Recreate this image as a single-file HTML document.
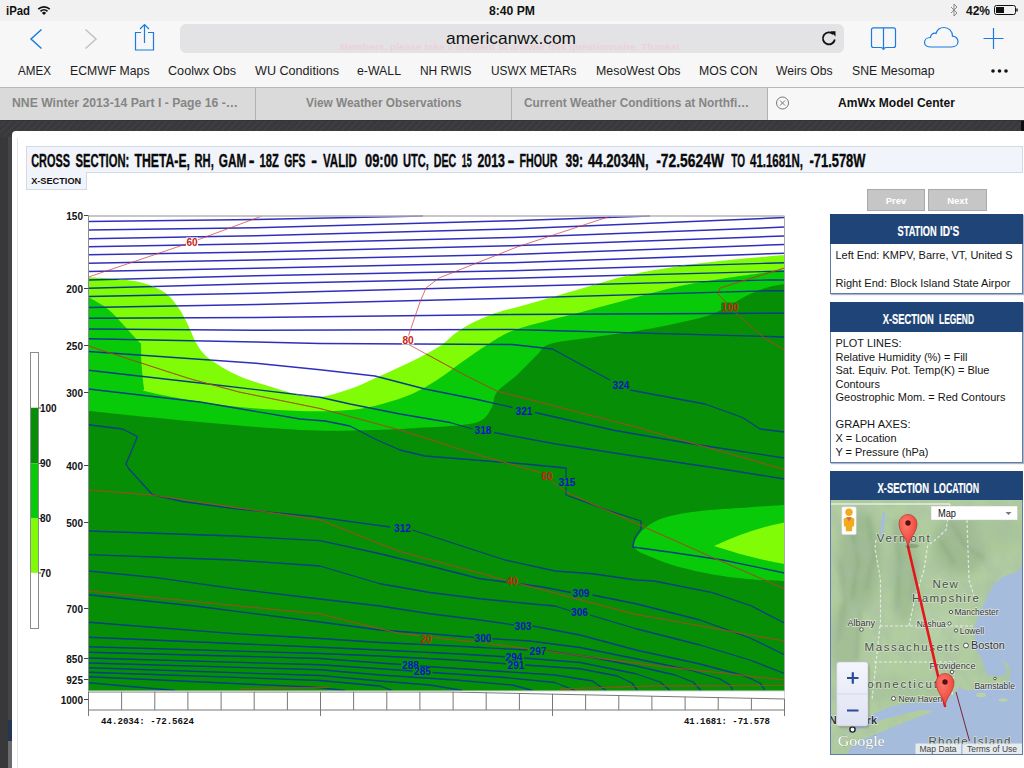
<!DOCTYPE html>
<html><head><meta charset="utf-8">
<style>
html,body{margin:0;padding:0;}
body{width:1024px;height:768px;overflow:hidden;position:relative;background:#3a3a3c;font-family:"Liberation Sans",sans-serif;}
.abs{position:absolute;}
#status{left:0;top:0;width:1024px;height:21px;background:#f1f1f1;}
#toolbar{left:0;top:21px;width:1024px;height:66px;background:#f7f7f7;}
#urlbar{left:180px;top:24px;width:664px;height:29px;background:#e3e3e5;border-radius:6px;}
#tabs{left:0;top:87px;width:1024px;height:33px;background:#dadada;border-top:1px solid #b9b9b9;box-sizing:border-box;}
.tab{position:absolute;top:0;height:32px;box-sizing:border-box;border-right:1px solid #b4b4b4;color:#7c7c7c;font-weight:bold;font-size:13px;line-height:31px;text-align:center;white-space:nowrap;}
#dark{left:0;top:120px;width:1024px;height:648px;background:#3a3a3c;background-image:repeating-linear-gradient(135deg,#39393b 0,#39393b 3px,#3e3e40 3px,#3e3e40 5px);}
#page{left:12px;top:131px;width:1012px;height:637px;background:#fff;border-top-left-radius:4px;}
.bm{position:absolute;top:63px;font-size:13.5px;color:#1a1a1a;white-space:nowrap;line-height:16px;}
.st{position:absolute;top:3px;font-size:12.5px;font-weight:bold;color:#111;line-height:15px;white-space:nowrap;}
</style></head><body>
<div id="status" class="abs"></div>
<div id="toolbar" class="abs"></div>
<div id="urlbar" class="abs"></div>
<div id="tabs" class="abs"></div>
<div id="dark" class="abs"></div>
<div id="page" class="abs"></div>
<!--CHROME_START-->
<div class="abs" style="left:768px;top:88px;width:256px;height:32px;background:#f7f7f7;"></div>
<div class="abs" style="left:255px;top:88px;width:1px;height:32px;background:#b2b2b2;"></div>
<div class="abs" style="left:511px;top:88px;width:1px;height:32px;background:#b2b2b2;"></div>
<div class="abs" style="left:767px;top:88px;width:1px;height:32px;background:#b2b2b2;"></div>
<svg class="abs" style="left:0;top:0" width="1024" height="131" viewBox="0 0 1024 131" font-family="'Liberation Sans',sans-serif">
<!-- status bar -->
<g font-weight="bold" font-size="12" fill="#111">
<text x="6" y="14.5" textLength="24" lengthAdjust="spacingAndGlyphs">iPad</text>
<text x="489" y="14.5" textLength="46" lengthAdjust="spacingAndGlyphs">8:40 PM</text>
<text x="966" y="14.5" textLength="24" lengthAdjust="spacingAndGlyphs">42%</text>
</g>
<!-- wifi -->
<g fill="none" stroke="#111" stroke-width="1.7" stroke-linecap="butt">
<path d="M38.3 9.2 A8 8 0 0 1 49.7 9.2"/>
<path d="M40.5 11.4 A5 5 0 0 1 47.5 11.4"/>
</g>
<path d="M44 15 L41.9 12.9 A3 3 0 0 1 46.1 12.9 Z" fill="#111"/>
<!-- bluetooth -->
<path d="M951 7 L957 13 L954 16 L954 4 L957 7 L951 13" fill="none" stroke="#8a8a8a" stroke-width="1"/>
<!-- battery -->
<rect x="994.5" y="5.5" width="21" height="9" rx="2" fill="none" stroke="#111" stroke-width="1"/>
<rect x="996" y="7" width="8" height="6" fill="#111"/>
<path d="M1017 8.5 v3" stroke="#111" stroke-width="1.4"/>
<!-- toolbar icons -->
<path d="M41.5 29.5 L31 39 L41.5 48.5" fill="none" stroke="#1b7be0" stroke-width="1.5"/>
<path d="M85.5 29.5 L96 39 L85.5 48.5" fill="none" stroke="#c2c2c2" stroke-width="1.5"/>
<g fill="none" stroke="#1b7be0" stroke-width="1.2">
<path d="M141 32.5 H135.5 V50 H153.5 V32.5 H148"/>
<path d="M144.5 43 V25 M140 29 L144.5 24.5 L149 29"/>
</g>
<!-- url text -->
<text x="446" y="44" font-size="17" fill="#111" textLength="130" lengthAdjust="spacingAndGlyphs">americanwx.com</text>
<text x="340" y="49.5" font-size="9.5" font-weight="bold" fill="#ecd2d8" textLength="340" lengthAdjust="spacingAndGlyphs">Members, please take a moment to answer this questionnaire. Thanks!</text>
<!-- reload -->
<path d="M833.2 34.2 A6 6 0 1 0 834.8 39.5" fill="none" stroke="#111" stroke-width="1.8"/>
<path d="M830.3 31.2 L835.5 31.2 L835.5 36.6 Z" fill="#111"/>
<!-- bookmarks icon -->
<g fill="none" stroke="#1b7be0" stroke-width="1.2">
<path d="M873.5 27.8 H893.5 a2 2 0 0 1 2 2 V45.5 a2 2 0 0 1 -2 2 H886.5 Q883.5 47.5 883.5 50 Q883.5 47.5 880.5 47.5 H873.5 a2 2 0 0 1 -2 -2 V29.8 a2 2 0 0 1 2 -2 Z M883.5 27.8 V49"/>
<!-- cloud -->
<path d="M931 47 H951.5 C955.5 47 958 44.5 958 41.5 C958 38.5 955.5 36.2 952.5 36.2 C952.5 31 948.5 27.5 944 27.5 C940 27.5 937 30 936 33.5 C933.5 32.5 930.5 34.5 930.5 37.5 C927 37.5 924.5 39.5 924.5 42.5 C924.5 45 927 47 931 47 Z"/>
<!-- plus -->
<path d="M983.5 38.5 H1003.5 M993.5 28 V49"/>
</g>
<!-- bookmarks bar -->
<g font-size="13" fill="#1c1c1c" lengthAdjust="spacingAndGlyphs">
<text x="18" y="75.3" textLength="33" lengthAdjust="spacingAndGlyphs">AMEX</text>
<text x="70" y="75.3" textLength="79.5" lengthAdjust="spacingAndGlyphs">ECMWF Maps</text>
<text x="168" y="75.3" textLength="68" lengthAdjust="spacingAndGlyphs">Coolwx Obs</text>
<text x="255" y="75.3" textLength="84" lengthAdjust="spacingAndGlyphs">WU Conditions</text>
<text x="357" y="75.3" textLength="44" lengthAdjust="spacingAndGlyphs">e-WALL</text>
<text x="420" y="75.3" textLength="51.5" lengthAdjust="spacingAndGlyphs">NH RWIS</text>
<text x="491" y="75.3" textLength="85.5" lengthAdjust="spacingAndGlyphs">USWX METARs</text>
<text x="596" y="75.3" textLength="84.5" lengthAdjust="spacingAndGlyphs">MesoWest Obs</text>
<text x="699" y="75.3" textLength="58.5" lengthAdjust="spacingAndGlyphs">MOS CON</text>
<text x="776" y="75.3" textLength="56.5" lengthAdjust="spacingAndGlyphs">Weirs Obs</text>
<text x="852" y="75.3" textLength="82.5" lengthAdjust="spacingAndGlyphs">SNE Mesomap</text>
</g>
<circle cx="993" cy="71" r="1.8" fill="#111"/><circle cx="999.5" cy="71" r="1.8" fill="#111"/><circle cx="1006" cy="71" r="1.8" fill="#111"/>
<!-- tabs -->
<g font-size="13" font-weight="bold" fill="#858585">
<text x="12" y="106.8" textLength="226" lengthAdjust="spacingAndGlyphs">NNE Winter 2013-14 Part I - Page 16 -…</text>
<text x="306" y="106.8" textLength="155.5" lengthAdjust="spacingAndGlyphs">View Weather Observations</text>
<text x="524" y="106.8" textLength="225" lengthAdjust="spacingAndGlyphs">Current Weather Conditions at Northfi…</text>
<text x="838" y="106.8" textLength="117" lengthAdjust="spacingAndGlyphs" fill="#111">AmWx Model Center</text>
</g>
<circle cx="782.5" cy="103" r="6" fill="none" stroke="#777" stroke-width="1"/>
<path d="M780 100.5 L785 105.5 M785 100.5 L780 105.5" stroke="#777" stroke-width="1"/>
</svg>
<!--CHROME_END-->
<!--C1_START-->
<div class="abs" style="left:17px;top:138px;width:1px;height:640px;background:#e4e4e4;"></div>
<div class="abs" style="left:0;top:137px;width:8px;height:640px;background:#38383a;"></div>
<div class="abs" style="left:8px;top:137px;width:4px;height:583px;background:#454548;"></div>
<div class="abs" style="left:8px;top:720px;width:4px;height:21px;background:#253552;"></div>
<div class="abs" style="left:8px;top:741px;width:4px;height:27px;background:#6c6c6e;"></div>
<div class="abs" style="left:1021px;top:120px;width:3px;height:11px;background:#0e0e12;"></div>
<div class="abs" style="left:0;top:120px;width:1024px;height:1px;background:#343436;"></div>
<div class="abs" style="left:26px;top:146px;width:997px;height:27px;background:#f1f4fa;border:1px solid #d3dae3;box-sizing:border-box;"></div>
<div class="abs" style="left:26px;top:172px;width:61px;height:18px;background:#f1f4fa;border:1px solid #d3dae3;border-top:none;box-sizing:border-box;"></div>
<svg class="abs" style="left:0;top:140px" width="1024" height="60" viewBox="0 140 1024 60" font-family="'Liberation Sans',sans-serif" font-weight="bold">
<g font-size="17.6" fill="#0a0a0a" stroke="#0a0a0a" stroke-width="0.35">
<text x="31.25" y="166.9" textLength="38.75" lengthAdjust="spacingAndGlyphs">CROSS</text>
<text x="75.5" y="166.9" textLength="53.75" lengthAdjust="spacingAndGlyphs">SECTION:</text>
<text x="134.5" y="166.9" textLength="55.5" lengthAdjust="spacingAndGlyphs">THETA-E,</text>
<text x="194.5" y="166.9" textLength="19.25" lengthAdjust="spacingAndGlyphs">RH,</text>
<text x="218.75" y="166.9" textLength="27.5" lengthAdjust="spacingAndGlyphs">GAM</text>
<text x="248.75" y="166.9" textLength="5.75" lengthAdjust="spacingAndGlyphs">-</text>
<text x="259.5" y="166.9" textLength="19.25" lengthAdjust="spacingAndGlyphs">18Z</text>
<text x="284.25" y="166.9" textLength="21.25" lengthAdjust="spacingAndGlyphs">GFS</text>
<text x="311.25" y="166.9" textLength="5.75" lengthAdjust="spacingAndGlyphs">-</text>
<text x="323" y="166.9" textLength="33.75" lengthAdjust="spacingAndGlyphs">VALID</text>
<text x="365" y="166.9" textLength="33" lengthAdjust="spacingAndGlyphs">09:00</text>
<text x="403" y="166.9" textLength="25.75" lengthAdjust="spacingAndGlyphs">UTC,</text>
<text x="433.75" y="166.9" textLength="22.5" lengthAdjust="spacingAndGlyphs">DEC</text>
<text x="461.8" y="166.9" textLength="10" lengthAdjust="spacingAndGlyphs">15</text>
<text x="477.5" y="166.9" textLength="27.5" lengthAdjust="spacingAndGlyphs">2013</text>
<text x="507.5" y="166.9" textLength="7" lengthAdjust="spacingAndGlyphs">-</text>
<text x="519.5" y="166.9" textLength="38" lengthAdjust="spacingAndGlyphs">FHOUR</text>
<text x="565.5" y="166.9" textLength="17.5" lengthAdjust="spacingAndGlyphs">39:</text>
<text x="588" y="166.9" textLength="60.75" lengthAdjust="spacingAndGlyphs">44.2034N,</text>
<text x="656.25" y="166.9" textLength="67.75" lengthAdjust="spacingAndGlyphs">-72.5624W</text>
<text x="731.25" y="166.9" textLength="13.75" lengthAdjust="spacingAndGlyphs">TO</text>
<text x="750" y="166.9" textLength="53" lengthAdjust="spacingAndGlyphs">41.1681N,</text>
<text x="809.5" y="166.9" textLength="56" lengthAdjust="spacingAndGlyphs">-71.578W</text>
</g>
<text x="31.2" y="184" font-size="9" fill="#111" textLength="50" lengthAdjust="spacingAndGlyphs">X-SECTION</text>
</svg>
<!-- prev/next -->
<div class="abs" style="left:867px;top:189px;width:58px;height:22px;background:#c6c6c6;border:1px solid #a9a9a9;box-sizing:border-box;color:#fff;font-weight:bold;font-size:9.5px;line-height:21px;text-align:center;">Prev</div>
<div class="abs" style="left:928px;top:189px;width:59px;height:22px;background:#c6c6c6;border:1px solid #a9a9a9;box-sizing:border-box;color:#fff;font-weight:bold;font-size:9.5px;line-height:21px;text-align:center;">Next</div>
<!-- station box -->
<div class="abs" style="left:830px;top:214px;width:193px;height:80px;background:#fff;border:1px solid #5d7ca8;box-sizing:border-box;box-shadow:1px 1px 1px rgba(90,110,150,.5);"></div>
<div class="abs" style="left:830px;top:214px;width:193px;height:29.5px;background:#1f4477;"></div>
<!-- legend box -->
<div class="abs" style="left:830px;top:302px;width:193px;height:161px;background:#fff;border:1px solid #5d7ca8;box-sizing:border-box;box-shadow:1px 1px 1px rgba(90,110,150,.5);"></div>
<div class="abs" style="left:830px;top:302px;width:193px;height:29.5px;background:#1f4477;"></div>
<!-- location box -->
<div class="abs" style="left:830px;top:471px;width:193px;height:284px;background:#fff;border:1px solid #5d7ca8;box-sizing:border-box;"></div>
<div class="abs" style="left:830px;top:471px;width:193px;height:29px;background:#1f4477;"></div>
<svg class="abs" style="left:824px;top:210px" width="200" height="300" viewBox="824 210 200 300" font-family="'Liberation Sans',sans-serif">
<g font-size="14.6" font-weight="bold" fill="#fff" stroke="#fff" stroke-width="0.2">
<text x="897.5" y="235.8" textLength="39.2" lengthAdjust="spacingAndGlyphs">STATION</text>
<text x="940" y="235.8" textLength="19.2" lengthAdjust="spacingAndGlyphs">ID'S</text>
<text x="882.75" y="323.8" textLength="51" lengthAdjust="spacingAndGlyphs">X-SECTION</text>
<text x="939" y="323.8" textLength="35" lengthAdjust="spacingAndGlyphs">LEGEND</text>
<text x="877.5" y="492.6" textLength="51.5" lengthAdjust="spacingAndGlyphs">X-SECTION</text>
<text x="933.75" y="492.6" textLength="45.25" lengthAdjust="spacingAndGlyphs">LOCATION</text>
</g>
<g font-size="11" fill="#151515">
<text x="835.5" y="259" textLength="177" lengthAdjust="spacingAndGlyphs">Left End: KMPV, Barre, VT, United S</text>
<text x="835.5" y="287" textLength="175" lengthAdjust="spacingAndGlyphs">Right End: Block Island State Airpor</text>
<text x="835.5" y="347" textLength="66" lengthAdjust="spacingAndGlyphs">PLOT LINES:</text>
<text x="835.5" y="361" textLength="132" lengthAdjust="spacingAndGlyphs">Relative Humidity (%) = Fill</text>
<text x="835.5" y="373.8" textLength="154" lengthAdjust="spacingAndGlyphs">Sat. Equiv. Pot. Temp(K) = Blue</text>
<text x="835.5" y="388" textLength="44.5" lengthAdjust="spacingAndGlyphs">Contours</text>
<text x="835.5" y="401" textLength="170" lengthAdjust="spacingAndGlyphs">Geostrophic Mom. = Red Contours</text>
<text x="835.5" y="427.9" textLength="75" lengthAdjust="spacingAndGlyphs">GRAPH AXES:</text>
<text x="835.5" y="442" textLength="61" lengthAdjust="spacingAndGlyphs">X = Location</text>
<text x="835.5" y="456" textLength="93" lengthAdjust="spacingAndGlyphs">Y = Pressure (hPa)</text>
</g>
</svg>
<!--C1_END-->
<!--CHART_START-->
<svg class="abs" style="left:0;top:200px" width="800" height="540" viewBox="0 200 800 540" font-family="'Liberation Sans',sans-serif">
<rect x="88.5" y="216" width="696.0" height="475" fill="#fff"/>
<path d="M88.5 277.25 C92.1 277.5 101.6 277.7 110 278.5 C118.4 279.3 130.0 279.8 139 282 C148.0 284.2 157.3 287.6 164 292 C170.7 296.4 174.8 302.7 179 308.5 C183.2 314.3 186.1 321.2 189 327 C191.9 332.8 193.2 338.2 196.5 343.5 C199.8 348.8 201.9 353.1 209 358.5 C216.1 363.9 227.8 371.0 239 376 C250.2 381.0 266.3 385.3 276.5 388.5 C286.7 391.7 292.8 393.6 300 395 C307.2 396.4 311.7 398.0 320 397 C328.3 396.0 340.0 392.5 350 389 C360.0 385.5 369.6 380.7 380 376 C390.4 371.3 402.5 366.0 412.5 361 C422.5 356.0 432.1 351.2 440 346 C447.9 340.8 451.7 335.2 460 330 C468.3 324.8 479.2 319.2 490 315 C500.8 310.8 510.0 309.3 525 305 C540.0 300.7 562.5 294.0 580 289 C597.5 284.0 613.3 278.8 630 275 C646.7 271.2 663.3 268.5 680 266 C696.7 263.5 712.6 261.8 730 260 C747.4 258.2 775.4 255.8 784.5 255 L784.5 691 L88.5 691 Z" fill="#80fc06"/>
<path d="M88.5 297 C91.9 299.2 102.2 304.3 109 310 C115.8 315.7 124.0 325.7 129 331 C134.0 336.3 137.0 339.8 139 342 C141.0 344.2 140.6 340.9 141 344.5 C141.4 348.1 141.0 356.2 141.5 363.5 C142.0 370.8 143.2 383.3 144 388 C144.8 392.7 139.0 389.5 146.5 391.5 C154.0 393.5 173.6 397.4 189 400 C204.4 402.6 220.5 405.2 239 407 C257.5 408.8 281.5 410.5 300 411 C318.5 411.5 336.3 411.2 350 410 C363.7 408.8 371.7 406.7 382 404 C392.3 401.3 402.8 398.0 412 394 C421.2 390.0 428.7 385.3 437 380 C445.3 374.7 453.7 367.8 462 362 C470.3 356.2 478.7 350.2 487 345 C495.3 339.8 501.5 335.2 512 331 C522.5 326.8 538.7 323.1 550 320 C561.3 316.9 566.7 316.0 580 312.5 C593.3 309.0 613.3 303.4 630 299 C646.7 294.6 663.3 289.6 680 286 C696.7 282.4 712.6 280.2 730 277.5 C747.4 274.8 775.4 271.2 784.5 270 L784.5 691 L88.5 691 Z" fill="#08ca08"/>
<path d="M88.5 411 C105.2 412.7 153.8 417.8 189 421 C224.2 424.2 269.0 428.5 300 430 C331.0 431.5 354.2 430.4 375 430 C395.8 429.6 410.5 428.3 425 427.5 C439.5 426.7 452.5 426.2 462 425 C471.5 423.8 477.0 423.0 482 420 C487.0 417.0 489.5 411.7 492 407 C494.5 402.3 492.8 397.3 497 392 C501.2 386.7 510.3 381.2 517 375 C523.7 368.8 531.5 360.2 537 355 C542.5 349.8 540.8 346.9 550 344 C559.2 341.1 576.7 339.8 592 337.5 C607.3 335.2 627.3 332.5 642 330 C656.7 327.5 668.7 325.0 680 322.5 C691.3 320.0 701.7 317.9 710 315 C718.3 312.1 723.3 308.5 730 305 C736.7 301.5 743.8 296.9 750 294 C756.2 291.1 761.2 289.2 767 287.5 C772.8 285.8 781.6 284.6 784.5 284 L784.5 691 L88.5 691 Z" fill="#068e06"/>
<path d="M784.5 505 C778.3 505.4 761.6 506.5 747.5 507.5 C733.4 508.5 713.8 509.3 700 511 C686.2 512.7 674.2 514.7 665 517.5 C655.8 520.3 649.8 524.4 645 528 C640.2 531.6 637.8 536.0 636 539 C634.2 542.0 633.7 544.0 634 546 C634.3 548.0 635.8 549.4 638 551 C640.2 552.6 641.8 553.2 647.5 555.5 C653.2 557.8 662.1 561.9 672.5 565 C682.9 568.1 697.5 571.7 710 574 C722.5 576.3 735.1 577.8 747.5 579 C759.9 580.2 778.3 580.7 784.5 581 Z" fill="#08ca08"/>
<path d="M784.5 522.5 Q750 529 714 546 Q750 558 784.5 564 Z" fill="#80fc06"/>
<clipPath id="gclip"><path d="M88.5 277.25 C92.1 277.5 101.6 277.7 110 278.5 C118.4 279.3 130.0 279.8 139 282 C148.0 284.2 157.3 287.6 164 292 C170.7 296.4 174.8 302.7 179 308.5 C183.2 314.3 186.1 321.2 189 327 C191.9 332.8 193.2 338.2 196.5 343.5 C199.8 348.8 201.9 353.1 209 358.5 C216.1 363.9 227.8 371.0 239 376 C250.2 381.0 266.3 385.3 276.5 388.5 C286.7 391.7 292.8 393.6 300 395 C307.2 396.4 311.7 398.0 320 397 C328.3 396.0 340.0 392.5 350 389 C360.0 385.5 369.6 380.7 380 376 C390.4 371.3 402.5 366.0 412.5 361 C422.5 356.0 432.1 351.2 440 346 C447.9 340.8 451.7 335.2 460 330 C468.3 324.8 479.2 319.2 490 315 C500.8 310.8 510.0 309.3 525 305 C540.0 300.7 562.5 294.0 580 289 C597.5 284.0 613.3 278.8 630 275 C646.7 271.2 663.3 268.5 680 266 C696.7 263.5 712.6 261.8 730 260 C747.4 258.2 775.4 255.8 784.5 255 L784.5 691 L88.5 691 Z"/></clipPath>
<clipPath id="wclip"><path d="M88.5 277.25 C92.1 277.5 101.6 277.7 110 278.5 C118.4 279.3 130.0 279.8 139 282 C148.0 284.2 157.3 287.6 164 292 C170.7 296.4 174.8 302.7 179 308.5 C183.2 314.3 186.1 321.2 189 327 C191.9 332.8 193.2 338.2 196.5 343.5 C199.8 348.8 201.9 353.1 209 358.5 C216.1 363.9 227.8 371.0 239 376 C250.2 381.0 266.3 385.3 276.5 388.5 C286.7 391.7 292.8 393.6 300 395 C307.2 396.4 311.7 398.0 320 397 C328.3 396.0 340.0 392.5 350 389 C360.0 385.5 369.6 380.7 380 376 C390.4 371.3 402.5 366.0 412.5 361 C422.5 356.0 432.1 351.2 440 346 C447.9 340.8 451.7 335.2 460 330 C468.3 324.8 479.2 319.2 490 315 C500.8 310.8 510.0 309.3 525 305 C540.0 300.7 562.5 294.0 580 289 C597.5 284.0 613.3 278.8 630 275 C646.7 271.2 663.3 268.5 680 266 C696.7 263.5 712.6 261.8 730 260 C747.4 258.2 775.4 255.8 784.5 255 L784.5 214 L88.5 214 Z"/></clipPath>
<g fill="none" stroke="#2424b8" stroke-width="1.5" stroke-linejoin="round" opacity="0.95" clip-path="url(#wclip)">
<path d="M88.5 221.5 L256 219.5 L423 216"/>
<path d="M88.5 230 L256 227.75 L512 220.75 L650 216"/>
<path d="M88.5 238.75 L256 235.75 L512 229 L768 218.25 L784.5 217.5"/>
<path d="M88.5 246.75 L256 243.75 L512 237.5 L768 227.75 L784.5 227"/>
<path d="M88.5 254.75 L256 252 L512 245.75 L768 236.5 L784.5 236"/>
<path d="M88.5 263.25 L256 260 L512 254.5 L768 245 L784.5 244.5"/>
<path d="M88.5 271.5 L256 268.25 L512 262.75 L768 253.75 L784.5 253.25"/>
<path d="M88.5 280 L256 275.75 L512 270.75 L768 263.25 L784.5 262.75"/>
<path d="M88.5 288.25 L256 283.75 L512 278.25 L768 271.5 L784.5 271.25"/>
<path d="M88.5 296.5 L256 293.25 L512 286.5 L768 280 L784.5 280"/>
<path d="M88.5 307.5 L256 304.5 L512 298.25 L768 290.75 L784.5 290.75"/>
<path d="M88.5 318.25 L256 317.5 L512 314.5 L768 313.25 L784.5 313.25"/>
<path d="M88.5 329 L256 330.25 L512 329.5 L768 336.5 L784.5 337"/>
<path d="M88.5 338.75 L256 342 L320 343.5 L512 344.5 L552.5 349 L580 364 L610 380 M630 390 L705 404 L742.5 417.5 L760 429 L784.5 432"/>
<path d="M88.5 351.5 L256 363.25 L320 369.75 L375 376 L425 389 L475 399 L512.5 407.5 M535 412.5 L615 430.5 L693 444 L784.5 458"/>
<path d="M88.5 370.25 L200 383 L320 397.25 L350 404 L400 414 L450 422.5 L472.5 429 M494 432.5 L556 444 L634 456 L712.5 467.5 L784.5 479"/>
<path d="M88.5 389 L200 402 L300 419 L325 421 L350 426 L375 439 L400 450 L425 456 L475 460 L525 464 L566 468 L566 495 L610 511 L641 521 L641 529 L635 537.5 L632.5 547 L672.5 552.5 L722.5 560 L784.5 573"/>
<path d="M88.5 424.75 L122.5 429 L137.5 436.5 L126 464 L129 469 L152.5 494.75 L182.5 501.5 L234 508.6 L312.5 516.4 L390 527 M412.5 530 L455 543.75 L505 560 L555 571 L592.5 573.75 L636 580 L654 581 L712.5 592.6 L751.5 606 L784.5 623"/>
<path d="M88.5 531 L234 536 L320 540.6 L380 553.75 L430 566 L480 578.75 L510 582.5 L542.5 587 L571 592.5 M592.5 595 L636 603.75 L700 620 L750 638 L784.5 654.75"/>
<path d="M88.5 554.7 L234 560 L320 566 L380 583.75 L430 592.5 L480 598.75 L530 603.75 L555 606 L571 611 M590 615 L636 628.75 L700 645 L750 660 L784.5 673.5"/>
<path d="M88.5 571 L156 577.7 L234 588.7 L320 599 L380 606 L430 613.75 L480 620 L514 625 M532.5 626 L580 635 L636 650 L700 664 L745 676 L760 683 L765 690.5"/>
<path d="M88.5 594.75 L195 606 L320 622 L380 630 L430 633.75 L474 637.5 M492.5 638.75 L530 641 L580 647.5 L636 658.75 L690 670 L720 679 L730 685 L732.5 690.5"/>
<path d="M88.5 622.25 L234 633.6 L320 638.5 L380 642.5 L455 646 L527.5 650 M547.5 651 L592.5 657.5 L636 666 L675 675 L693 682 L701 690.5"/>
<path d="M88.5 637.25 L320 647.25 L380 650 L455 653.75 L505 656.75 M524 658 L580 662.5 L636 673.75 L660 682 L670 690.5"/>
<path d="M88.5 646.75 L320 653.5 L380 656 L455 660 L506 663.75 M525 665 L580 668.75 L617.5 676 L632 683 L637.5 690.5"/>
<path d="M88.5 652.25 L320 658.5 L380 663 L401 664.5 M420 666 L480 670 L555 675 L592.5 681 L606 690.5"/>
<path d="M88.5 658 L320 664.75 L380 668.75 L412.5 671 M432.5 672.5 L505 677.5 L555 682.5 L575 690.5"/>
<path d="M88.5 663 L320 669.75 L380 675 L455 680 L512.5 685 L532.5 690.5"/>
<path d="M88.5 667.75 L320 675.5 L380 681 L430 685 L462.5 690.5"/>
<path d="M88.5 672.25 L320 680.5 L380 686 L392.5 690.5"/>
<path d="M88.5 676.75 L316 687.25 L345 690.5"/>
<path d="M88.5 682.75 L175 690.5"/>
</g>
<g fill="none" stroke="#053f86" stroke-width="1.3" stroke-linejoin="round" clip-path="url(#gclip)">
<path d="M88.5 221.5 L256 219.5 L423 216"/>
<path d="M88.5 230 L256 227.75 L512 220.75 L650 216"/>
<path d="M88.5 238.75 L256 235.75 L512 229 L768 218.25 L784.5 217.5"/>
<path d="M88.5 246.75 L256 243.75 L512 237.5 L768 227.75 L784.5 227"/>
<path d="M88.5 254.75 L256 252 L512 245.75 L768 236.5 L784.5 236"/>
<path d="M88.5 263.25 L256 260 L512 254.5 L768 245 L784.5 244.5"/>
<path d="M88.5 271.5 L256 268.25 L512 262.75 L768 253.75 L784.5 253.25"/>
<path d="M88.5 280 L256 275.75 L512 270.75 L768 263.25 L784.5 262.75"/>
<path d="M88.5 288.25 L256 283.75 L512 278.25 L768 271.5 L784.5 271.25"/>
<path d="M88.5 296.5 L256 293.25 L512 286.5 L768 280 L784.5 280"/>
<path d="M88.5 307.5 L256 304.5 L512 298.25 L768 290.75 L784.5 290.75"/>
<path d="M88.5 318.25 L256 317.5 L512 314.5 L768 313.25 L784.5 313.25"/>
<path d="M88.5 329 L256 330.25 L512 329.5 L768 336.5 L784.5 337"/>
<path d="M88.5 338.75 L256 342 L320 343.5 L512 344.5 L552.5 349 L580 364 L610 380 M630 390 L705 404 L742.5 417.5 L760 429 L784.5 432"/>
<path d="M88.5 351.5 L256 363.25 L320 369.75 L375 376 L425 389 L475 399 L512.5 407.5 M535 412.5 L615 430.5 L693 444 L784.5 458"/>
<path d="M88.5 370.25 L200 383 L320 397.25 L350 404 L400 414 L450 422.5 L472.5 429 M494 432.5 L556 444 L634 456 L712.5 467.5 L784.5 479"/>
<path d="M88.5 389 L200 402 L300 419 L325 421 L350 426 L375 439 L400 450 L425 456 L475 460 L525 464 L566 468 L566 495 L610 511 L641 521 L641 529 L635 537.5 L632.5 547 L672.5 552.5 L722.5 560 L784.5 573"/>
<path d="M88.5 424.75 L122.5 429 L137.5 436.5 L126 464 L129 469 L152.5 494.75 L182.5 501.5 L234 508.6 L312.5 516.4 L390 527 M412.5 530 L455 543.75 L505 560 L555 571 L592.5 573.75 L636 580 L654 581 L712.5 592.6 L751.5 606 L784.5 623"/>
<path d="M88.5 531 L234 536 L320 540.6 L380 553.75 L430 566 L480 578.75 L510 582.5 L542.5 587 L571 592.5 M592.5 595 L636 603.75 L700 620 L750 638 L784.5 654.75"/>
<path d="M88.5 554.7 L234 560 L320 566 L380 583.75 L430 592.5 L480 598.75 L530 603.75 L555 606 L571 611 M590 615 L636 628.75 L700 645 L750 660 L784.5 673.5"/>
<path d="M88.5 571 L156 577.7 L234 588.7 L320 599 L380 606 L430 613.75 L480 620 L514 625 M532.5 626 L580 635 L636 650 L700 664 L745 676 L760 683 L765 690.5"/>
<path d="M88.5 594.75 L195 606 L320 622 L380 630 L430 633.75 L474 637.5 M492.5 638.75 L530 641 L580 647.5 L636 658.75 L690 670 L720 679 L730 685 L732.5 690.5"/>
<path d="M88.5 622.25 L234 633.6 L320 638.5 L380 642.5 L455 646 L527.5 650 M547.5 651 L592.5 657.5 L636 666 L675 675 L693 682 L701 690.5"/>
<path d="M88.5 637.25 L320 647.25 L380 650 L455 653.75 L505 656.75 M524 658 L580 662.5 L636 673.75 L660 682 L670 690.5"/>
<path d="M88.5 646.75 L320 653.5 L380 656 L455 660 L506 663.75 M525 665 L580 668.75 L617.5 676 L632 683 L637.5 690.5"/>
<path d="M88.5 652.25 L320 658.5 L380 663 L401 664.5 M420 666 L480 670 L555 675 L592.5 681 L606 690.5"/>
<path d="M88.5 658 L320 664.75 L380 668.75 L412.5 671 M432.5 672.5 L505 677.5 L555 682.5 L575 690.5"/>
<path d="M88.5 663 L320 669.75 L380 675 L455 680 L512.5 685 L532.5 690.5"/>
<path d="M88.5 667.75 L320 675.5 L380 681 L430 685 L462.5 690.5"/>
<path d="M88.5 672.25 L320 680.5 L380 686 L392.5 690.5"/>
<path d="M88.5 676.75 L316 687.25 L345 690.5"/>
<path d="M88.5 682.75 L175 690.5"/>
</g>
<g fill="none" stroke="#d03a3a" stroke-width="0.8" opacity="0.9">
<path d="M88.5 277 L192 242 L262 216"/>
<path d="M611 216 L517 247 L439 278 L426 288 L420 302 L406 343 L468.5 377 L497.6 391.4 L634 426.5 L784.5 469.5"/>
<path d="M784.5 268 L720 288 L718 294 L736 313 L763 337 L784.5 350"/>
<path d="M88.5 346 L189 378.5 L239 392 L320 408.5 L400 430 L475 454 L540 472.5 L568 493 L642 526 L712.5 557.4 L784.5 588.7"/>
<path d="M88.5 490 L152 495 L320 520 L400 551.5 L505 580 L634 614 L784.5 641"/>
<path d="M88.5 591 L320 614 L400 633.6 L500 645 L650 665 L784.5 680"/>
<path d="M240 688.5 L330 687.5"/>
<path d="M560 689 L650 686 L784.5 685.5"/>
</g>
<g fill="none" stroke="#86560f" stroke-width="0.8" opacity="0.8" clip-path="url(#gclip)">
<path d="M88.5 277 L192 242 L262 216"/>
<path d="M611 216 L517 247 L439 278 L426 288 L420 302 L406 343 L468.5 377 L497.6 391.4 L634 426.5 L784.5 469.5"/>
<path d="M784.5 268 L720 288 L718 294 L736 313 L763 337 L784.5 350"/>
<path d="M88.5 346 L189 378.5 L239 392 L320 408.5 L400 430 L475 454 L540 472.5 L568 493 L642 526 L712.5 557.4 L784.5 588.7"/>
<path d="M88.5 490 L152 495 L320 520 L400 551.5 L505 580 L634 614 L784.5 641"/>
<path d="M88.5 591 L320 614 L400 633.6 L500 645 L650 665 L784.5 680"/>
<path d="M240 688.5 L330 687.5"/>
<path d="M560 689 L650 686 L784.5 685.5"/>
</g>
<rect x="612.1" y="381" width="17.8" height="9" fill="#068e06"/>
<text x="621" y="389.1" text-anchor="middle" font-size="10" font-weight="bold" fill="#0a14c8" textLength="16.8" lengthAdjust="spacingAndGlyphs">324</text>
<rect x="515.1" y="407" width="17.8" height="9" fill="#068e06"/>
<text x="524" y="415.1" text-anchor="middle" font-size="10" font-weight="bold" fill="#0a14c8" textLength="16.8" lengthAdjust="spacingAndGlyphs">321</text>
<rect x="474.1" y="426" width="17.8" height="9" fill="#068e06"/>
<text x="483" y="434.1" text-anchor="middle" font-size="10" font-weight="bold" fill="#0a14c8" textLength="16.8" lengthAdjust="spacingAndGlyphs">318</text>
<rect x="558.1" y="478" width="17.8" height="9" fill="#068e06"/>
<text x="567" y="486.1" text-anchor="middle" font-size="10" font-weight="bold" fill="#0a14c8" textLength="16.8" lengthAdjust="spacingAndGlyphs">315</text>
<rect x="393.6" y="524.25" width="17.8" height="9" fill="#068e06"/>
<text x="402.5" y="532.35" text-anchor="middle" font-size="10" font-weight="bold" fill="#0a14c8" textLength="16.8" lengthAdjust="spacingAndGlyphs">312</text>
<rect x="572.1" y="588.5" width="17.8" height="9" fill="#068e06"/>
<text x="581" y="596.6" text-anchor="middle" font-size="10" font-weight="bold" fill="#0a14c8" textLength="16.8" lengthAdjust="spacingAndGlyphs">309</text>
<rect x="570.6" y="608" width="17.8" height="9" fill="#068e06"/>
<text x="579.5" y="616.1" text-anchor="middle" font-size="10" font-weight="bold" fill="#0a14c8" textLength="16.8" lengthAdjust="spacingAndGlyphs">306</text>
<rect x="514.1" y="621.5" width="17.8" height="9" fill="#068e06"/>
<text x="523" y="629.6" text-anchor="middle" font-size="10" font-weight="bold" fill="#0a14c8" textLength="16.8" lengthAdjust="spacingAndGlyphs">303</text>
<rect x="474.1" y="634.25" width="17.8" height="9" fill="#068e06"/>
<text x="483" y="642.35" text-anchor="middle" font-size="10" font-weight="bold" fill="#0a14c8" textLength="16.8" lengthAdjust="spacingAndGlyphs">300</text>
<rect x="529.1" y="646.5" width="17.8" height="9" fill="#068e06"/>
<text x="538" y="654.6" text-anchor="middle" font-size="10" font-weight="bold" fill="#0a14c8" textLength="16.8" lengthAdjust="spacingAndGlyphs">297</text>
<rect x="505.1" y="653" width="17.8" height="9" fill="#068e06"/>
<text x="514" y="661.1" text-anchor="middle" font-size="10" font-weight="bold" fill="#0a14c8" textLength="16.8" lengthAdjust="spacingAndGlyphs">294</text>
<rect x="507.1" y="660.5" width="17.8" height="9" fill="#068e06"/>
<text x="516" y="668.6" text-anchor="middle" font-size="10" font-weight="bold" fill="#0a14c8" textLength="16.8" lengthAdjust="spacingAndGlyphs">291</text>
<rect x="401.6" y="660.5" width="17.8" height="9" fill="#068e06"/>
<text x="410.5" y="668.6" text-anchor="middle" font-size="10" font-weight="bold" fill="#0a14c8" textLength="16.8" lengthAdjust="spacingAndGlyphs">288</text>
<rect x="413.6" y="667.25" width="17.8" height="9" fill="#068e06"/>
<text x="422.5" y="675.35" text-anchor="middle" font-size="10" font-weight="bold" fill="#0a14c8" textLength="16.8" lengthAdjust="spacingAndGlyphs">285</text>
<rect x="185.9" y="237.5" width="12.2" height="9" fill="#fff"/>
<text x="192" y="245.6" text-anchor="middle" font-size="10" font-weight="bold" fill="#c81e14" textLength="11.2" lengthAdjust="spacingAndGlyphs">60</text>
<rect x="401.9" y="335.5" width="12.2" height="9" fill="#fff"/>
<text x="408" y="343.6" text-anchor="middle" font-size="10" font-weight="bold" fill="#c81e14" textLength="11.2" lengthAdjust="spacingAndGlyphs">80</text>
<rect x="721.1" y="302.5" width="17.8" height="9" fill="#068e06"/>
<text x="730" y="310.6" text-anchor="middle" font-size="10" font-weight="bold" fill="#c81e14" textLength="16.8" lengthAdjust="spacingAndGlyphs">100</text>
<rect x="540.9" y="471.5" width="12.2" height="9" fill="#068e06"/>
<text x="547" y="479.6" text-anchor="middle" font-size="10" font-weight="bold" fill="#c81e14" textLength="11.2" lengthAdjust="spacingAndGlyphs">60</text>
<rect x="505.9" y="576.5" width="12.2" height="9" fill="#068e06"/>
<text x="512" y="584.6" text-anchor="middle" font-size="10" font-weight="bold" fill="#c81e14" textLength="11.2" lengthAdjust="spacingAndGlyphs">40</text>
<rect x="419.9" y="634.5" width="12.2" height="9" fill="#068e06"/>
<text x="426" y="642.6" text-anchor="middle" font-size="10" font-weight="bold" fill="#c81e14" textLength="11.2" lengthAdjust="spacingAndGlyphs">20</text>
<path d="M88.5 216 V716" fill="none" stroke="#8c8c8c" stroke-width="1"/>
<path d="M784.5 216 V716" fill="none" stroke="#a8a8a8" stroke-width="1"/>
<path d="M88.5 216 H784.5" stroke="#b4b4b4" stroke-width="1.5"/>
<rect x="88.5" y="691" width="696.0" height="26" fill="#fff"/>
<path d="M88.5 710 H784.5 M88.5 692 H450 L784.5 699 M88.5 691.5 V716 M121.6 691.5 V710 M154.8 691.5 V710 M187.9 691.5 V710 M221.1 691.5 V710 M254.2 691.5 V710 M287.4 691.5 V710 M320.5 691.5 V716 M353.6 691.5 V710 M386.8 691.5 V710 M419.9 691.5 V710 M453.1 691.6 V710 M486.2 692.3 V710 M519.4 693.1 V710 M552.5 693.8 V716 M585.6 694.5 V710 M618.8 695.3 V710 M651.9 696.0 V710 M685.1 696.8 V710 M718.2 697.5 V710 M751.4 698.3 V710 M784.5 699.0 V716" fill="none" stroke="#787878" stroke-width="1"/>
<path d="M88.5 691 H784.5" stroke="#d8d8d8" stroke-width="1" />
<text x="83" y="219.6" text-anchor="end" font-size="10" font-weight="bold" fill="#111">150</text>
<text x="83" y="292.6" text-anchor="end" font-size="10" font-weight="bold" fill="#111">200</text>
<text x="83" y="349.6" text-anchor="end" font-size="10" font-weight="bold" fill="#111">250</text>
<text x="83" y="396.6" text-anchor="end" font-size="10" font-weight="bold" fill="#111">300</text>
<text x="83" y="469.6" text-anchor="end" font-size="10" font-weight="bold" fill="#111">400</text>
<text x="83" y="526.6" text-anchor="end" font-size="10" font-weight="bold" fill="#111">500</text>
<text x="83" y="612.6" text-anchor="end" font-size="10" font-weight="bold" fill="#111">700</text>
<text x="83" y="662.6" text-anchor="end" font-size="10" font-weight="bold" fill="#111">850</text>
<text x="83" y="683.6" text-anchor="end" font-size="10" font-weight="bold" fill="#111">925</text>
<text x="83" y="703.6" text-anchor="end" font-size="10" font-weight="bold" fill="#111">1000</text>
<path d=" M84 215.5 H88.5 M84 288.5 H88.5 M84 345.5 H88.5 M84 392.5 H88.5 M84 465.5 H88.5 M84 522.5 H88.5 M84 608.5 H88.5 M84 658.5 H88.5 M84 679.5 H88.5 M84 699.5 H88.5" stroke="#444" stroke-width="1" fill="none"/>
<g font-family="'Liberation Mono',monospace" font-weight="bold" font-size="9" fill="#111">
<text x="101" y="724" textLength="93" lengthAdjust="spacingAndGlyphs">44.2034: -72.5624</text>
<text x="684" y="724" textLength="86" lengthAdjust="spacingAndGlyphs">41.1681: -71.578</text>
</g>
<rect x="30.5" y="352.5" width="8" height="276" fill="#fff" stroke="#8c8c8c" stroke-width="1"/>
<rect x="31" y="407.75" width="7" height="55.75" fill="#068e06"/>
<rect x="31" y="463.5" width="7" height="55" fill="#08ca08"/>
<rect x="31" y="518.5" width="7" height="54.25" fill="#80fc06"/>
<path d="M38.5 408 H41" stroke="#555" stroke-width="1"/>
<text x="40" y="411.6" font-size="10" fill="#111" font-weight="bold">100</text>
<path d="M38.5 463.5 H41" stroke="#555" stroke-width="1"/>
<text x="40" y="467.1" font-size="10" fill="#111" font-weight="bold">90</text>
<path d="M38.5 518.5 H41" stroke="#555" stroke-width="1"/>
<text x="40" y="522.1" font-size="10" fill="#111" font-weight="bold">80</text>
<path d="M38.5 573 H41" stroke="#555" stroke-width="1"/>
<text x="40" y="576.6" font-size="10" fill="#111" font-weight="bold">70</text>
</svg>
<!--CHART_END-->
<!--MAP_START-->
<svg class="abs" style="left:831px;top:500px" width="191" height="254" viewBox="831 500 191 254" font-family="'Liberation Sans',sans-serif">
<defs>
<filter id="bl" x="-20%" y="-20%" width="140%" height="140%"><feGaussianBlur stdDeviation="5"/></filter>
<filter id="bl2" x="-20%" y="-20%" width="140%" height="140%"><feGaussianBlur stdDeviation="2.2"/></filter>
<filter id="sh" x="-30%" y="-30%" width="160%" height="160%"><feGaussianBlur stdDeviation="1.2"/></filter>
<linearGradient id="zg" x1="0" y1="0" x2="0" y2="1"><stop offset="0" stop-color="#f4f5fc"/><stop offset="1" stop-color="#dfe2f3"/></linearGradient>
<radialGradient id="pin" cx="0.4" cy="0.3" r="0.8"><stop offset="0" stop-color="#ff7a6e"/><stop offset="1" stop-color="#e8362c"/></radialGradient>
<filter id="noise" x="0" y="0" width="100%" height="100%"><feTurbulence type="fractalNoise" baseFrequency="0.07 0.05" numOctaves="4" seed="7"/><feColorMatrix type="matrix" values="0 0 0 0 0.38  0 0 0 0 0.5  0 0 0 0 0.38  1.6 0 0 0 -0.62"/></filter>
</defs>
<rect x="831" y="500" width="191" height="254" fill="#b1cda0"/>
<!-- relief -->
<g filter="url(#bl)" opacity="0.55">
<ellipse cx="860" cy="560" rx="22" ry="50" fill="#8fae84"/>
<ellipse cx="905" cy="570" rx="14" ry="55" fill="#93b187"/>
<ellipse cx="960" cy="545" rx="28" ry="30" fill="#8fae84"/>
<ellipse cx="845" cy="640" rx="14" ry="40" fill="#97b48a"/>
<ellipse cx="1000" cy="530" rx="25" ry="22" fill="#a4c294"/>
<ellipse cx="900" cy="690" rx="40" ry="14" fill="#a6c596"/>
<ellipse cx="940" cy="625" rx="30" ry="14" fill="#bdd5ad"/>
</g>
<g filter="url(#bl2)" opacity="0.35" stroke="#6f8f6c" stroke-width="3" fill="none">
<path d="M850 520 L858 560 L852 600 M868 515 L874 555 L866 590 M895 520 L900 560 L897 610 M915 560 L912 600 M950 520 L965 545 L985 560 M940 540 L955 565 M840 560 L845 600 L838 640 M860 610 L856 660"/>
</g>
<rect x="831" y="500" width="191" height="254" filter="url(#noise)" opacity="0.7"/>
<!-- water -->
<g fill="#a5bcdc">
<path d="M1022 566 L1017 572 L1004 576 L994 584 L988 595.5 L982 607 L978 617 L974.5 627 L975 640 L972.5 647 L980 655 L984 665 L986 674.5 L999 676.5 L1006.5 674 L1006 666 L1001.5 660 L1008 664 L1010.5 672 L1009.5 680.5 L1000 684.5 L990 685.5 L980 688.5 L968.5 690.5 L963 689 L959 686 L957 690 L953 695 L941 700 L929.5 701 L912 703 L892.5 706 L878.5 711.75 L869 715.7 L859 723.5 L851 729 L847 734 L863 727.5 L882.5 719.5 L902 714.5 L921.5 709.8 L933.5 711.5 L921.5 716 L902 723.5 L882.5 731.5 L863 739 L851 747 L847 754 L1022 754 Z"/>
<path d="M883 512 C880 520 882 528 880 536 C879 540 881 544 882 540 C884 530 885 520 885 512 Z"/>
</g>
<!-- islands -->
<ellipse cx="981" cy="695" rx="5" ry="2.2" fill="#b9d3a6"/><ellipse cx="1003" cy="700" rx="4.5" ry="1.8" fill="#b9d3a6"/>
<!-- state borders -->
<g fill="none" stroke="#fff" stroke-width="1.2" stroke-dasharray="3 2" opacity="0.65">

<path d="M950 504 L946 530 L935 540 L927.5 546 L924 570 L914.5 600 L909 626"/>
<path d="M876 540 L875 548 L880.5 580 L880.5 626"/>
<path d="M967 520 L969 580 L976 602"/>
<path d="M880 626 H975"/>
<path d="M880 626 L872 700"/>
<path d="M874 662 H955"/>
<path d="M955 662 L952 696"/>
</g>
<path d="M831 504 H950" stroke="#eef3e8" stroke-width="1.3" opacity="0.85"/>
<!-- thin dark red line -->
<path d="M956 692 L969.5 741" stroke="#7a1020" stroke-width="0.9"/>
<!-- labels -->
<g font-size="11.5" fill="#4a4f4a" stroke="#e4eedc" stroke-width="1.6" paint-order="stroke" stroke-opacity="0.6">
<text x="876.7" y="541.8" textLength="53" lengthAdjust="spacing">Vermont</text>
<text x="932.4" y="588.3" textLength="25.4" lengthAdjust="spacing">New</text>
<text x="912" y="602" textLength="67" lengthAdjust="spacing">Hampshire</text>
<text x="864.6" y="651" textLength="95" lengthAdjust="spacing">Massachusetts</text>
<text x="857" y="688.4" textLength="80" lengthAdjust="spacing">Connecticut</text>
<text x="928.5" y="745" textLength="82" lengthAdjust="spacing">Rhode Island</text>
</g>
<g font-size="9" fill="#333" stroke="#eef3ea" stroke-width="1.4" paint-order="stroke" stroke-opacity="0.7">
<text x="954.5" y="615.2" textLength="44" lengthAdjust="spacingAndGlyphs">Manchester</text>
<text x="847.4" y="625.6" textLength="27.5" lengthAdjust="spacingAndGlyphs">Albany</text>
<text x="916.8" y="627" textLength="29" lengthAdjust="spacingAndGlyphs">Nashua</text>
<text x="959.7" y="633.8" textLength="24.5" lengthAdjust="spacingAndGlyphs">Lowell</text>
<text x="970.9" y="649" font-size="10.5" textLength="34" lengthAdjust="spacingAndGlyphs">Boston</text>
<text x="929.5" y="668.5" textLength="46" lengthAdjust="spacingAndGlyphs">Providence</text>
<text x="974.4" y="688.6" textLength="40.5" lengthAdjust="spacingAndGlyphs">Barnstable</text>
<text x="898.6" y="701.7" textLength="43.5" lengthAdjust="spacingAndGlyphs">New Haven</text>
<text x="829" y="723.5" font-size="10.5" font-weight="bold" textLength="48" lengthAdjust="spacingAndGlyphs">New York</text>
</g>
<g fill="#fff" stroke="#444" stroke-width="0.9">
<circle cx="951" cy="612" r="1.6"/><circle cx="861.5" cy="629.5" r="1.7"/><circle cx="949.5" cy="623.5" r="1.6"/><circle cx="956" cy="630.5" r="1.6"/>
<circle cx="966" cy="645.5" r="2.4"/><circle cx="952" cy="672" r="1.8"/><circle cx="995" cy="678.5" r="1.3"/><circle cx="893.5" cy="698.5" r="2"/>
<circle cx="852.5" cy="729.5" r="2.6" stroke-width="1.4" stroke="#222"/>
</g>
<!-- red route -->
<path d="M908 546.5 L945 706" stroke="#e8141c" stroke-width="2.6" stroke-linecap="round"/>
<!-- markers -->
<g>
<ellipse cx="912" cy="546" rx="7" ry="2" fill="#000" opacity="0.15"/>
<path d="M908 547 C907 538 899 533 899 523.5 A9 9 0 0 1 917 523.5 C917 533 909 538 908 547 Z" fill="url(#pin)" stroke="#b8302a" stroke-width="0.7"/>
<circle cx="908" cy="523" r="2.7" fill="#5a1010"/>
<path d="M945 706.5 C944 697 936 692 936 682.5 A9 9 0 0 1 954 682.5 C954 692 946 697 945 706.5 Z" fill="url(#pin)" stroke="#b8302a" stroke-width="0.7"/>
<circle cx="945" cy="682" r="2.7" fill="#5a1010"/>
</g>
<!-- pegman -->
<rect x="841.7" y="506.7" width="14.6" height="28" rx="1.5" fill="#fff" stroke="#c8c8c8" stroke-width="0.6"/>
<circle cx="849" cy="512.3" r="3.7" fill="#f2ab1e"/>
<path d="M843.6 518.8 Q849 515.2 854.4 518.8 L854 526.5 L852.3 526.5 L852 531.3 L846 531.3 L845.7 526.5 L844 526.5 Z" fill="#f2ab1e"/>
<path d="M846.3 517.3 L849 521.5 L851.7 517.3 Z" fill="#e2643c"/>
<!-- map type -->
<rect x="931" y="506" width="86.5" height="14" fill="#fff" stroke="#c0c0c0" stroke-width="0.5"/>
<text x="938" y="517" font-size="10" fill="#111" textLength="18" lengthAdjust="spacingAndGlyphs">Map</text>
<path d="M1005.5 512 L1011.5 512 L1008.5 515 Z" fill="#777"/>
<!-- zoom control -->
<rect x="838" y="663.5" width="31" height="64" rx="3" fill="#000" opacity="0.25" filter="url(#sh)"/>
<rect x="836.7" y="662" width="31.3" height="64" rx="2.5" fill="url(#zg)" stroke="#c4c8da" stroke-width="0.6"/>
<path d="M837 694 H868" stroke="#cfd3e6" stroke-width="0.8"/>
<path d="M847 678 H858.5 M852.8 672.2 V683.8 M847 710.5 H858.5" stroke="#2c4a98" stroke-width="2.2"/>
<!-- google logo -->
<text x="837.7" y="746" font-family="'Liberation Serif',serif" font-size="15.5" fill="#fff" stroke="#7a8f78" stroke-width="0.5" paint-order="stroke" textLength="47" lengthAdjust="spacingAndGlyphs">Google</text>
<!-- bottom bar -->
<rect x="915.5" y="743.5" width="45.5" height="10.5" fill="#f1f3f1" opacity="0.85"/>
<rect x="962.5" y="743.5" width="59.5" height="10.5" fill="#f1f3f1" opacity="0.85"/>
<g font-size="8.5" fill="#444">
<text x="919.5" y="751.7" textLength="37" lengthAdjust="spacingAndGlyphs">Map Data</text>
<text x="967" y="751.7" textLength="50" lengthAdjust="spacingAndGlyphs">Terms of Use</text>
</g>
</svg>
<!--MAP_END-->
</body></html>
